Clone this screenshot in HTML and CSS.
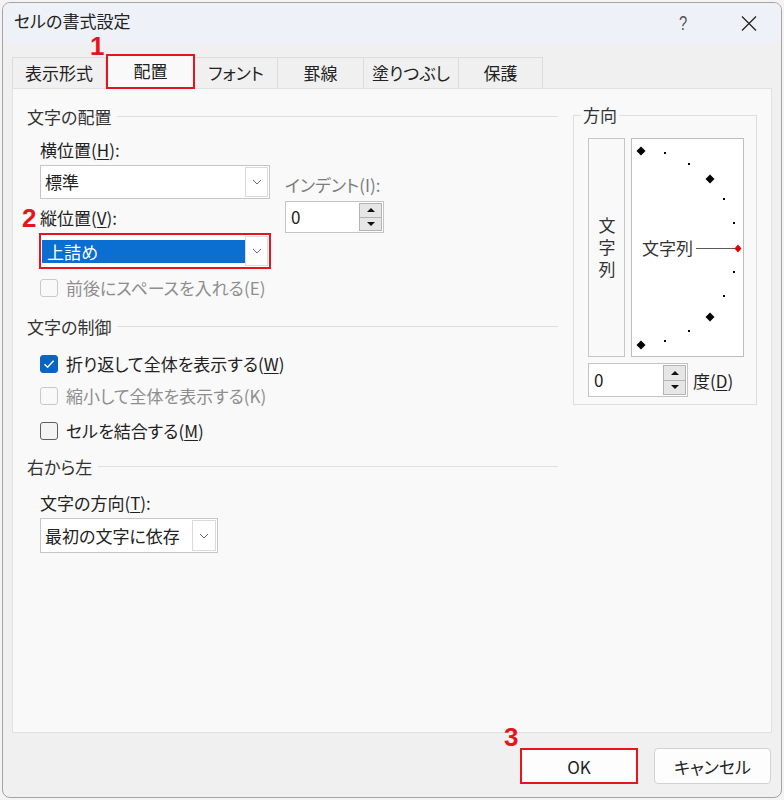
FILE: index.html
```html
<!DOCTYPE html>
<html lang="ja">
<head>
<meta charset="utf-8">
<title>セルの書式設定</title>
<link rel="stylesheet" href="styles.css">
</head>
<body>
<div class="dialog">
  <div class="titlebar">
    <span class="title">セルの書式設定</span>
    <span class="help">?</span>
    <span class="close"><svg width="16" height="15" viewBox="0 0 16 15"><path d="M1 0.5L15 14.5M15 0.5L1 14.5" stroke="#1f1f1f" stroke-width="1.2" fill="none"/></svg></span>
  </div>

  <span class="marker m1">1</span>
  <span class="marker m2">2</span>
  <span class="marker m3">3</span>

  <div class="body">
    <div class="tabs">
      <div class="tab">表示形式</div>
      <div class="tab active">配置</div>
      <div class="tab">フォント</div>
      <div class="tab">罫線</div>
      <div class="tab">塗りつぶし</div>
      <div class="tab">保護</div>
    </div>

    <div class="panel">
      <div class="left">
        <div class="section-head"><span>文字の配置</span><i class="rule"></i></div>
        <div class="align-grid">
          <div class="col-main">
            <div class="label">横位置(<u>H</u>):</div>
            <div class="combo">
              <span class="combo-text">標準</span>
              <span class="drop"><svg width="10" height="6" viewBox="0 0 10 6"><polyline points="1,1 5,5 9,1" fill="none" stroke="#6b6b6b" stroke-width="1"/></svg></span>
            </div>
            <div class="label label-v">縦位置(<u>V</u>):</div>
            <div class="combo marked">
              <span class="combo-text selected">上詰め</span>
              <span class="drop"><svg width="10" height="6" viewBox="0 0 10 6"><polyline points="1,1 5,5 9,1" fill="none" stroke="#6b6b6b" stroke-width="1"/></svg></span>
            </div>
          </div>
          <div class="col-indent">
            <div class="label disabled-dark">インデント(I):</div>
            <div class="spin indent-spin">
              <span class="spin-val">0</span>
              <span class="spin-btns">
                <span class="spin-btn"><i class="tri-up"></i></span>
                <span class="spin-btn"><i class="tri-down"></i></span>
              </span>
            </div>
          </div>
        </div>
        <div class="check disabled row-space"><span class="box"></span><span>前後にスペースを入れる(E)</span></div>

        <div class="section-head sec-control"><span>文字の制御</span><i class="rule"></i></div>
        <div class="check row-wrap"><span class="box checked"><svg width="16" height="16" viewBox="0 0 16 16"><polyline points="3.5,8.2 6.6,11.2 12.6,4.8" fill="none" stroke="#fff" stroke-width="1.4"/></svg></span><span>折り返して全体を表示する(<u>W</u>)</span></div>
        <div class="check disabled row-shrink"><span class="box"></span><span>縮小して全体を表示する(K)</span></div>
        <div class="check row-merge"><span class="box"></span><span>セルを結合する(<u>M</u>)</span></div>

        <div class="section-head sec-rtl"><span>右から左</span><i class="rule"></i></div>
        <div class="label label-dir">文字の方向(<u>T</u>):</div>
        <div class="combo combo-dir">
          <span class="combo-text">最初の文字に依存</span>
          <span class="drop"><svg width="10" height="6" viewBox="0 0 10 6"><polyline points="1,1 5,5 9,1" fill="none" stroke="#6b6b6b" stroke-width="1"/></svg></span>
        </div>
      </div>

      <div class="group">
        <span class="group-title">方向</span>
        <div class="orient-row">
          <div class="vtext"><span class="vtext-inner">文字列</span></div>
          <div class="orient">
            <svg class="orient-svg" width="113" height="219" viewBox="0 0 113 219">
              <g fill="#000">
                <polygon points="10,8.5 14.5,13 10,17.5 5.5,13"/>
                <polygon points="79,36.5 83.5,41 79,45.5 74.5,41"/>
                <polygon points="79,174.5 83.5,179 79,183.5 74.5,179"/>
                <polygon points="10,202.5 14.5,207 10,211.5 5.5,207"/>
                <rect x="33" y="14" width="2" height="2"/>
                <rect x="57" y="25" width="2" height="2"/>
                <rect x="92" y="60" width="2" height="2"/>
                <rect x="102" y="84" width="2" height="2"/>
                <rect x="102" y="133" width="2" height="2"/>
                <rect x="92" y="157" width="2" height="2"/>
                <rect x="57" y="192" width="2" height="2"/>
                <rect x="33" y="202" width="2" height="2"/>
              </g>
              <line x1="65" y1="110.5" x2="105" y2="110.5" stroke="#5a5a5a" stroke-width="1"/>
              <polygon points="107,106.5 110.5,110.5 107,114.5 103.5,110.5" fill="#e00000"/>
            </svg>
            <span class="orient-text">文字列</span>
          </div>
        </div>
        <div class="degree-row">
          <div class="spin deg-spin">
            <span class="spin-val">0</span>
            <span class="spin-btns">
              <span class="spin-btn"><i class="tri-up"></i></span>
              <span class="spin-btn"><i class="tri-down"></i></span>
            </span>
          </div>
          <span class="deg-label">度(<u>D</u>)</span>
        </div>
      </div>
    </div>

    <div class="footer">
      <button class="btn btn-ok">OK</button>
      <button class="btn btn-cancel">キャンセル</button>
    </div>
  </div>
</div>
</body>
</html>
```

FILE: styles.css
```css
* { box-sizing: border-box; }

html, body { margin: 0; padding: 0; }

body {
  background: #f3f3f3;
  font-family: "Noto Sans CJK JP", "Noto Sans", sans-serif;
  font-size: 17px;
  color: #222;
  font-feature-settings: "palt" 1;
}

u { text-decoration-thickness: 1px; text-underline-offset: 2px; }

.dialog {
  position: relative;
  margin: 2px 0 0 2px;
  width: 780px;
  height: 796px;
  border: 1px solid #a4a4a4;
  border-radius: 8px;
  background: #f0f0f0;
  overflow: hidden;
  display: flex;
  flex-direction: column;
}

/* title bar */
.titlebar {
  flex: none;
  height: 41px;
  background: #eef2f8;
  display: flex;
  align-items: flex-start;
  padding: 8px 9px 0 11px;
}
.title { flex: 1; line-height: 20px; font-size: 17px; color: #222; }
.help {
  width: 46px;
  margin-right: 20px;
  text-align: center;
  font-family: "Liberation Sans", "Noto Sans", sans-serif;
  font-size: 21px;
  line-height: 24px;
  color: #555;
  transform: scaleX(0.7);
}
.close {
  width: 46px;
  height: 22px;
  display: flex;
  align-items: center;
  justify-content: center;
  padding-top: 2px;
}

/* annotation markers */
.marker {
  position: absolute;
  z-index: 5;
  color: #e8141c;
  font-family: "Liberation Sans", Arial, sans-serif;
  font-weight: bold;
  font-size: 26px;
  line-height: 1;
}
.m1 { left: 87px; top: 30px; }
.m2 { left: 19px; top: 202px; }
.m3 { left: 501px; top: 721px; }

/* body */
.body {
  flex: 1;
  display: flex;
  flex-direction: column;
  padding: 10px 9px 0 9px;
}

.tabs {
  flex: none;
  height: 34px;
  display: flex;
  align-items: flex-end;
  position: relative;
  z-index: 2;
}
.tab {
  height: 31px;
  display: flex;
  align-items: center;
  justify-content: center;
  background: #f0f0f0;
  border-top: 1px solid #dcdcdc;
  border-right: 1px solid #dcdcdc;
  line-height: 20px;
}
.tab:nth-child(1) { width: 94px; border-left: 1px solid #dcdcdc; }
.tab:nth-child(2) { width: 89px; }
.tab:nth-child(3) { width: 83px; }
.tab:nth-child(4) { width: 86px; }
.tab:nth-child(5) { width: 95px; }
.tab:nth-child(6) { width: 84px; }
.tab.active {
  height: 35px;
  margin-bottom: -1px;
  background: #f9f9f9;
  border: 2px solid #e8141c;
  padding-bottom: 1px;
}

.panel {
  flex: none;
  height: 645px;
  border: 1px solid #e1e1e1;
  background: #f9f9f9;
  display: flex;
  gap: 15px;
  padding: 18px 14px 0 14px;
}

.left { width: 531px; display: flex; flex-direction: column; }

.section-head {
  display: flex;
  align-items: center;
  gap: 6px;
  height: 20px;
  line-height: 20px;
  color: #333;
}
.rule { flex: 1; height: 1px; background: #dfdfdf; margin-top: -2px; }

.label { line-height: 20px; height: 20px; }
.disabled { color: #8e8e8e; }
.disabled-dark { color: #7c7c7c; }

.align-grid {
  display: flex;
  gap: 15px;
  padding-left: 13px;
  margin-top: 13px;
}
.col-main { width: 230px; display: flex; flex-direction: column; }
.col-indent { width: 99px; padding-top: 35px; display: flex; flex-direction: column; }

.combo {
  height: 34px;
  margin-top: 5px;
  border: 1px solid #c6c6c6;
  background: #fff;
  display: flex;
  align-items: center;
}
.combo-text { flex: 1; padding-left: 4px; line-height: 20px; white-space: nowrap; }
.drop {
  width: 23px;
  align-self: stretch;
  margin: 1px 1px 1px 0;
  border: 1px solid #dadada;
  display: flex;
  align-items: center;
  justify-content: center;
}
.label-v { margin-top: 9px; }
.combo.marked {
  margin-top: 6px;
  border-color: #e8141c;
  box-shadow: 0 0 0 1px #e8141c;
}
.combo-text.selected {
  align-self: stretch;
  margin: 5px 0 4px 1px;
  padding-left: 5px;
  background: #0a6fd1;
  color: #fff;
  display: flex;
  align-items: center;
}

.spin {
  display: flex;
  border: 1px solid #c4c4c4;
  background: #fff;
}
.spin-val { flex: 1; padding-left: 5px; display: flex; align-items: center; line-height: 20px; }
.spin-btns {
  width: 23px;
  margin: 1px 1px 1px 0;
  display: flex;
  flex-direction: column;
}
.spin-btn {
  flex: 1;
  background: #e6e6e6;
  border: 1px solid #b4b4b4;
  display: flex;
  align-items: center;
  justify-content: center;
}
.spin-btn + .spin-btn { border-top: none; }
.tri-up, .tri-down { width: 0; height: 0; border-left: 4px solid transparent; border-right: 4px solid transparent; }
.tri-up { border-bottom: 4px solid #111; }
.tri-down { border-top: 4px solid #111; }

.indent-spin { margin-top: 6px; height: 32px; }

.check {
  display: flex;
  align-items: center;
  gap: 8px;
  height: 20px;
  line-height: 20px;
  padding-left: 13px;
}
.box {
  width: 18px;
  height: 18px;
  border: 1px solid #5f5f5f;
  border-radius: 3px;
  background: #f4f4f4;
  flex: none;
  display: flex;
  align-items: center;
  justify-content: center;
}
.check.disabled .box { border-color: #c9c9c9; background: #f9f9f9; }
.box.checked { background: #0a64c2; border-color: #0a64c2; }

.row-space { margin-top: 10px; }
.sec-control { margin-top: 19px; }
.row-wrap { margin-top: 17px; }
.row-shrink { margin-top: 12px; }
.row-merge { margin-top: 15px; }
.sec-rtl { margin-top: 16px; }
.label-dir { margin-top: 16px; padding-left: 13px; }
.combo-dir { width: 178px; height: 35px; margin-left: 13px; }
.combo-dir .drop { width: 24px; }

/* orientation group */
.group {
  position: relative;
  width: 184px;
  height: 290px;
  margin-top: 8px;
  border: 1px solid #dedede;
  padding: 22px 12px 0 14px;
}
.group-title {
  position: absolute;
  top: -11px;
  left: 7px;
  padding: 0 2px;
  background: #f9f9f9;
  line-height: 20px;
  color: #333;
}
.orient-row { display: flex; gap: 6px; }
.vtext {
  width: 37px;
  height: 219px;
  border: 1px solid #c6c6c6;
  background: #f9f9f9;
  display: flex;
  align-items: center;
  justify-content: center;
  padding-top: 5px;
  color: #333;
}
.vtext-inner {
  writing-mode: vertical-rl;
  text-orientation: upright;
  letter-spacing: 5px;
  line-height: 20px;
  font-feature-settings: normal;
}
.orient {
  position: relative;
  width: 113px;
  height: 219px;
  border: 1px solid #bdbdbd;
  background: #fff;
}
.orient-svg { position: absolute; left: -1px; top: -1px; }
.orient-text {
  position: absolute;
  left: 10px;
  top: 99px;
  line-height: 20px;
  color: #333;
}
.degree-row { display: flex; align-items: center; gap: 5px; margin-top: 6px; }
.deg-spin { width: 100px; height: 34px; }
.deg-label { line-height: 20px; margin-top: 2px; }

/* footer */
.footer {
  flex: 1;
  display: flex;
  justify-content: flex-end;
  align-items: flex-start;
  gap: 16px;
  padding: 15px 1px 0 0;
}
.btn {
  height: 36px;
  border: 1px solid #d1d1d1;
  border-radius: 4px;
  background: #fdfdfd;
  font-family: "Noto Sans CJK JP", "Noto Sans", sans-serif;
  font-feature-settings: "palt" 1;
  font-size: 17px;
  color: #222;
  padding: 0;
}
.btn-ok { width: 118px; border: 2px solid #e8141c; border-radius: 0; }
.btn-cancel { width: 117px; }
```
